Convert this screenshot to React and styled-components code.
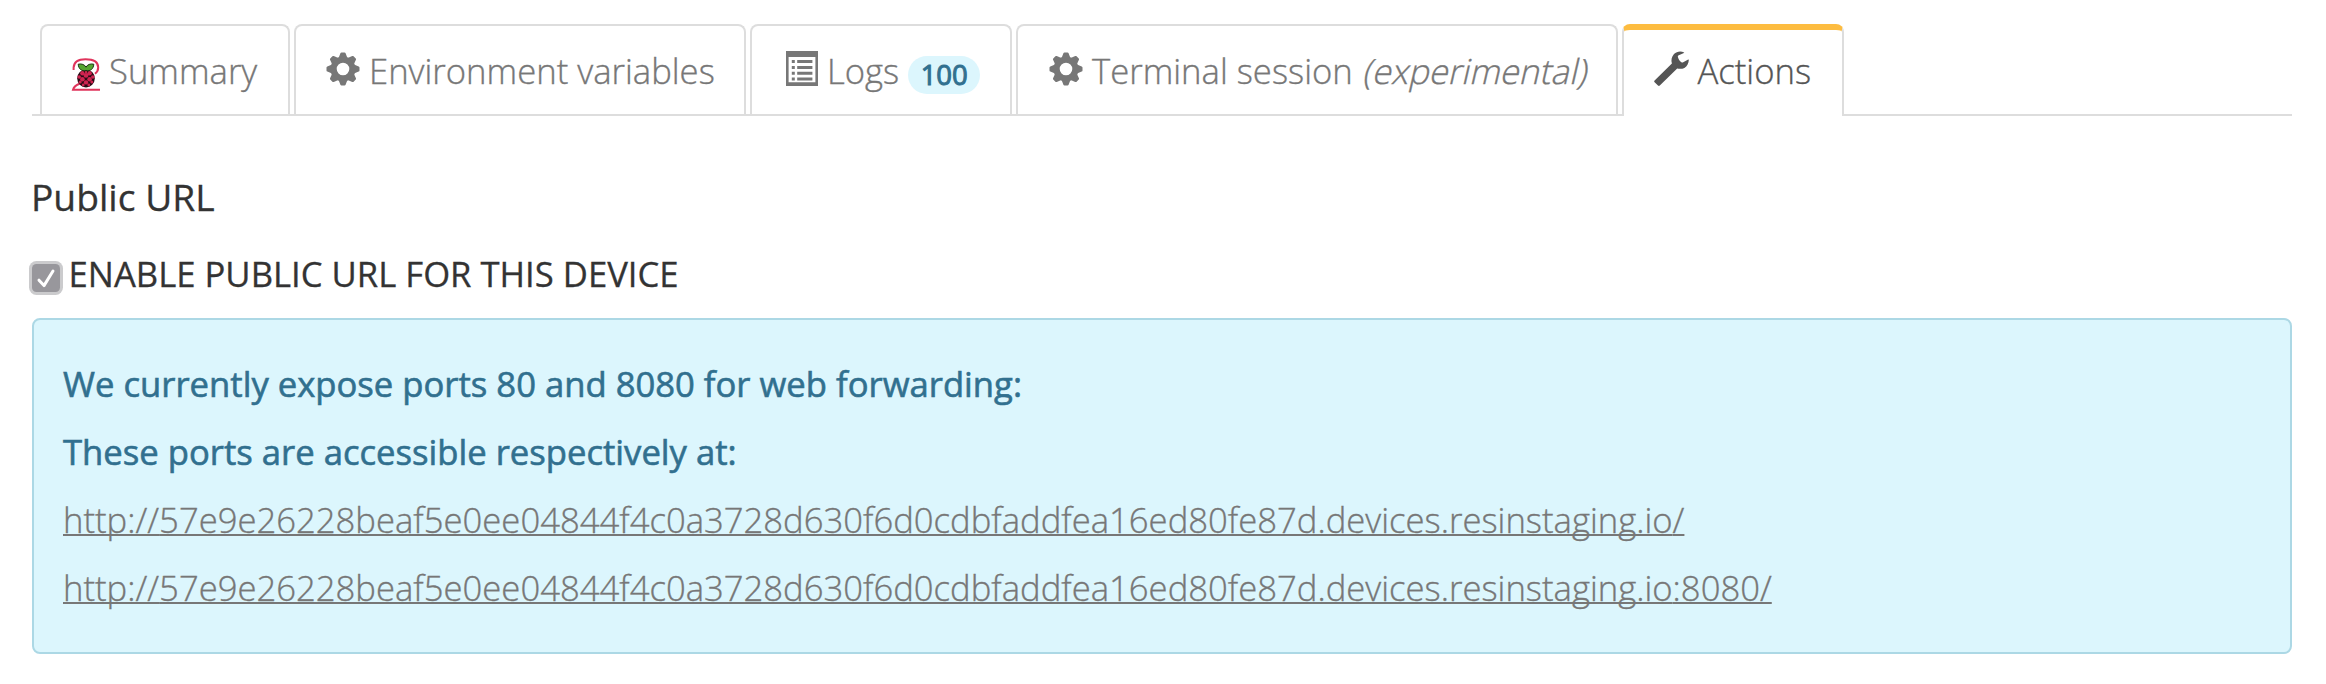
import React from "react";
import styled, { createGlobalStyle } from "styled-components";

const Global = createGlobalStyle`
  *, *::before, *::after { box-sizing: border-box; }
  html, body { margin: 0; background: #fff; }
  body { font-family: "Open Sans", sans-serif; font-size: 34.65px; line-height: 48px; color: #333; }
`;

const Page = styled.main`
  width: 2326px;
  height: 684px;
  padding: 24px 34px 0 32px;
`;

const Tabs = styled.nav`
  display: flex;
  gap: 4px;
  height: 92px;
  padding-left: 8px;
  border-bottom: 2px solid #ddd;
`;

const Tab = styled.a`
  display: flex;
  align-items: flex-start;
  flex: none;
  width: ${(p) => p.$width}px;
  height: ${(p) => (p.$active ? 92 : 90)}px;
  padding: ${(p) => (p.$active ? 17 : 21)}px 0 0 30px;
  border: 2px solid #ddd;
  border-top: ${(p) => (p.$active ? "6px solid #fdbc40" : "2px solid #ddd")};
  border-bottom: 0;
  border-radius: 8px 8px 0 0;
  background: #fff;
  color: ${(p) => (p.$active ? "#555" : "#777")};
  font-weight: 300;
  white-space: pre;
  -webkit-text-stroke: 0.35px currentColor;
`;

const Slanted = styled.em`
  display: inline-block;
  font-style: normal;
  transform: skewX(-13deg);
  transform-origin: 0 37px;
`;

const Icon = styled.svg`
  flex: none;
  width: ${(p) => p.$w}px;
  height: ${(p) => p.$h}px;
  margin: ${(p) => p.$top}px ${(p) => p.$gap}px 0 ${(p) => p.$left || 0}px;
  fill: currentColor;
  overflow: visible;
`;

const Badge = styled.span`
  width: 72px;
  height: 38px;
  margin: 9px 0 0 9px;
  border-radius: 19px;
  background: #dcf6fd;
  color: #31708f;
  font-size: 27.5px;
  font-weight: 400;
  line-height: 38px;
  text-align: center;
  -webkit-text-stroke: 1px currentColor;
`;

const Heading = styled.h4`
  margin: 56px 0 0 -1px;
  font-size: 37.2px;
  font-weight: 400;
  line-height: 50px;
  -webkit-text-stroke: 0.3px currentColor;
`;

const CheckRow = styled.label`
  display: flex;
  height: 48px;
  margin: 28px 0 0 -3px;
  text-transform: uppercase;
  -webkit-text-stroke: 0.3px currentColor;
`;

const Info = styled.section`
  margin-top: 20px;
  height: 336px;
  padding: 40px 29px;
  border: 2px solid #acd8e5;
  border-radius: 8px;
  background: #dcf6fd;
  color: #31708f;
`;

const Line = styled.p`
  margin: 0 0 20px;
  -webkit-text-stroke: 0.6px currentColor;
`;

const Link = styled.a`
  color: #777;
  font-weight: 300;
  text-decoration: underline;
  text-decoration-thickness: 2px;
  text-decoration-skip-ink: none;
  -webkit-text-stroke: 0.35px currentColor;
`;

const Cog = ({ left }) => (
  <Icon viewBox="-17 -17 34 34" $w={34} $h={34} $top={4.5} $gap={9} $left={left}>
    <circle r="9.4" fill="none" stroke="currentColor" strokeWidth="6.2" />
    {[0, 45, 90, 135, 180, 225, 270, 315].map((a) => (
      <path key={a} transform={`rotate(${a})`} d="M-4.4-11L-2.6-15.7Q-2.3-16.5-1.5-16.5H1.5Q2.3-16.5 2.6-15.7L4.4-11Z" />
    ))}
  </Icon>
);

const DRUPELETS = [
  [10.4, 15.2, 2.2], [17.6, 15.2, 2.2], [14, 17.4, 2.4], [7.2, 19, 1.8], [20.8, 19, 1.8],
  [10.4, 21.2, 2.3], [17.6, 21.2, 2.3], [14, 24.4, 2.2], [8.2, 24, 1.5], [19.8, 24, 1.5],
  [11.2, 27, 1.4], [16.8, 27, 1.4], [14, 14, 1.2],
];

const Raspberry = () => (
  <Icon viewBox="0 0 28 33" $w={28} $h={33} $top={11} $gap={9}>
    <path
      d="M1.6 12V9.5C2 3.5 7 1.3 13.5 1.3C21.5 1.3 26.2 4.2 26.2 9.5C26.2 12.5 25 14.2 23 15.8M7.5 25.8C4.5 27 1.8 29 1 31.8H28"
      fill="none" stroke="#e0355c" strokeWidth="2"
    />
    <ellipse cx="14" cy="20.4" rx="8.8" ry="9" fill="#2a0a14" />
    {DRUPELETS.map(([x, y, r]) => (
      <circle key={`${x}-${y}`} cx={x} cy={y} r={r} fill="#cf2450" />
    ))}
    <path
      d="M14 12.6C9.5 13.4 6.6 11 6.2 6.2C9.5 5.4 12.8 6.6 14 9.2C15.2 6.6 18.5 5.4 21.8 6.2C21.4 11 18.5 13.4 14 12.6Z"
      fill="#55a630" stroke="#1d3312" strokeWidth="1"
    />
  </Icon>
);

const ListIcon = () => (
  <Icon viewBox="0 0 32 35" $w={32} $h={35} $top={4} $gap={9.5} $left={3.5}>
    <path fillRule="evenodd" d="M0 0H32V35H0ZM2.6 6V31.2H29.4V6Z" />
    {[9.1, 14.9, 20.7, 26.5].map((y) => (
      <path key={y} d={`M5.8 ${y}h3v3h-3zM11.2 ${y}h15.2v3h-15.2z`} />
    ))}
  </Icon>
);

const Wrench = () => (
  <Icon viewBox="0 0 36 36" $w={36} $h={36} $top={4} $gap={7.5}>
    <path d="M.6 29.4L17.9 12.4C16.9 9 17.6 5.7 20 3C22.8.2 26.8-.4 30.1 1.4C30.3 1.6 30.2 1.9 29.9 2L24.8 4.2C24 4.6 23.7 5.2 23.9 6C24.4 8 25.6 10 27.4 11.2C28 11.6 28.6 11.6 29.2 11.3L34.2 8.6C34.6 8.4 34.8 8.6 34.8 9C34.7 12.2 33.2 15.2 30.4 16.9C28.2 18 25.6 18.1 23.2 17.5L5.8 34.6C5.2 35.2 4.6 35.2 4 34.6L.6 31.2C0 30.6 0 30 .6 29.4Z" />
  </Icon>
);

const Checkbox = () => (
  <Icon viewBox="0 0 34 34" $w={34} $h={34} $top={11} $gap={5.6}>
    <rect width="34" height="34" rx="7.5" fill="#cbcbcd" />
    <rect x="3" y="3" width="28" height="28" rx="4.5" fill="#98979c" />
    <path d="M10 19.2L15 24.6L24 10" fill="none" stroke="#fff" strokeWidth="3" strokeLinecap="round" strokeLinejoin="round" />
  </Icon>
);

const HOST = "57e9e26228beaf5e0ee04844f4c0a3728d630f6d0cdbfaddfea16ed80fe87d.devices.resinstaging.io";

export default function App() {
  return (
    <Page>
      <Global />
      <Tabs>
        <Tab $width={250}><Raspberry />Summary</Tab>
        <Tab $width={452}><Cog />Environment variables</Tab>
        <Tab $width={262}><ListIcon />Logs<Badge>100</Badge></Tab>
        <Tab $width={602}><Cog left={1} />Terminal session <Slanted>(experimental)</Slanted></Tab>
        <Tab $width={222} $active><Wrench />Actions</Tab>
      </Tabs>
      <Heading>Public URL</Heading>
      <CheckRow><Checkbox />Enable public URL for this device</CheckRow>
      <Info>
        <Line>We currently expose ports 80 and 8080 for web forwarding:</Line>
        <Line>These ports are accessible respectively at:</Line>
        <Line><Link>http://{HOST}/</Link></Line>
        <Line><Link>http://{HOST}:8080/</Link></Line>
      </Info>
    </Page>
  );
}
